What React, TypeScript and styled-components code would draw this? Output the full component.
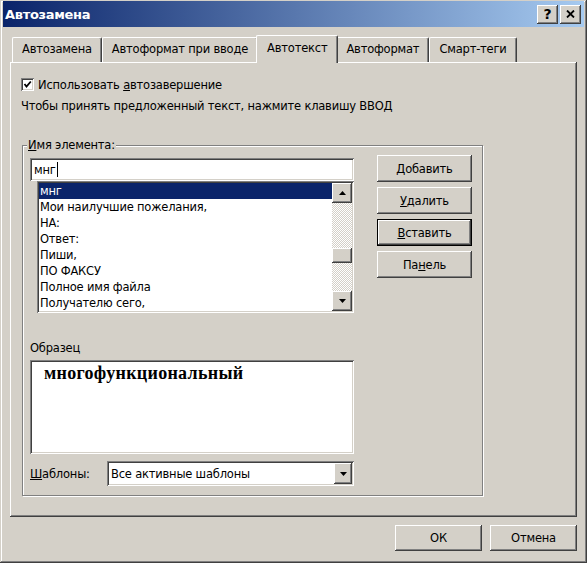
import React from "react";
import styled, { createGlobalStyle, css } from "styled-components";

const GlobalStyle = createGlobalStyle`
  html, body {
    margin: 0;
    padding: 0;
    background: #d4d0c8;
  }
  body {
    font-family: "DejaVu Sans", Tahoma, sans-serif;
    font-size: 11.5px;
    letter-spacing: -0.2px;
    color: #000;
  }
`;

const raised = css`
  background: #d4d0c8;
  box-shadow:
    inset -1px -1px #404040,
    inset 1px 1px #ffffff,
    inset -2px -2px #808080,
    inset 2px 2px #d4d0c8;
`;

const sunken = css`
  background: #fff;
  box-shadow:
    inset 1px 1px #808080,
    inset -1px -1px #ffffff,
    inset 2px 2px #404040,
    inset -2px -2px #d4d0c8;
`;

const items = [
  "мнг",
  "Мои наилучшие пожелания,",
  "НА:",
  "Ответ:",
  "Пиши,",
  "ПО ФАКСУ",
  "Полное имя файла",
  "Получателю сего,",
];

const tabs = [
  "Автозамена",
  "Автоформат при вводе",
  "Автотекст",
  "Автоформат",
  "Смарт-теги",
];

const ArrowUp = () => (
  <svg width="7" height="4" viewBox="0 0 7 4">
    <polygon points="3.5,0 7,4 0,4" fill="#000" />
  </svg>
);

const ArrowDown = () => (
  <svg width="7" height="4" viewBox="0 0 7 4">
    <polygon points="0,0 7,0 3.5,4" fill="#000" />
  </svg>
);

export default function App() {
  const thumbOffset = 45;

  return (
    <>
      <GlobalStyle />
      <Window>
        <TitleBar>
          <Title>Автозамена</Title>
          <Controls>
            <CaptionButton>
              <HelpGlyph>?</HelpGlyph>
            </CaptionButton>
            <CaptionButton>
              <svg width="9" height="8" viewBox="0 0 9 8">
                <path d="M1 0.5 L8 7.5 M8 0.5 L1 7.5" stroke="#000" strokeWidth="1.8" />
              </svg>
            </CaptionButton>
          </Controls>
        </TitleBar>

        <Body>
          <TabStrip>
            {tabs.map((t) => (
              <Tab key={t} $active={t === "Автотекст"}>
                {t}
              </Tab>
            ))}
          </TabStrip>

          <Panel>
            <CheckRow>
              <CheckBox>
                <svg width="9" height="9" viewBox="0 0 9 9">
                  <path d="M1.5 4 L3.5 6.5 L7.8 1.5" stroke="#000" strokeWidth="1.8" fill="none" />
                </svg>
              </CheckBox>
              <span>
                Использовать <Key>а</Key>втозавершение
              </span>
            </CheckRow>
            <Hint>Чтобы принять предложенный текст, нажмите клавишу ВВОД</Hint>

            <Group>
              <Legend>
                <Key>И</Key>мя элемента:
              </Legend>
              <GroupGrid>
                <LeftColumn>
                  <NameInput>
                    мнг<Caret />
                  </NameInput>
                  <ListBox>
                    <Items>
                      {items.map((it, i) => (
                        <Item key={it} $selected={i === 0}>
                          {it}
                        </Item>
                      ))}
                    </Items>
                    <ScrollBar>
                      <ScrollButton>
                        <ArrowUp />
                      </ScrollButton>
                      <Track $offset={thumbOffset}>
                        <Thumb />
                      </Track>
                      <ScrollButton>
                        <ArrowDown />
                      </ScrollButton>
                    </ScrollBar>
                  </ListBox>

                  <SampleLabel>Образец</SampleLabel>
                  <Sample>
                    <SampleText>многофункциональный</SampleText>
                  </Sample>

                  <TemplateRow>
                    <TemplateLabel>
                      <Key>Ш</Key>аблоны:
                    </TemplateLabel>
                    <Combo>
                      <ComboText>Все активные шаблоны</ComboText>
                      <ComboButton>
                        <ArrowDown />
                      </ComboButton>
                    </Combo>
                  </TemplateRow>
                </LeftColumn>

                <ActionColumn>
                  <ActionButton>
                    <Key>Д</Key>обавить
                  </ActionButton>
                  <ActionButton>
                    <Key>У</Key>далить
                  </ActionButton>
                  <ActionButton $default>
                    <Key>В</Key>ставить
                  </ActionButton>
                  <ActionButton>
                    Па<Key>н</Key>ель
                  </ActionButton>
                </ActionColumn>
              </GroupGrid>
            </Group>
          </Panel>

          <Footer>
            <DialogButton>ОК</DialogButton>
            <DialogButton>Отмена</DialogButton>
          </Footer>
        </Body>
      </Window>
    </>
  );
}

const Window = styled.div`
  width: 587px;
  height: 563px;
  box-sizing: border-box;
  padding: 1px 3px 3px 3px;
  display: flex;
  flex-direction: column;
  background: #d4d0c8;
  box-shadow:
    inset -1px -1px #404040,
    inset 1px 1px #d4d0c8,
    inset -2px -2px #808080,
    inset 2px 2px #ffffff;
`;

const TitleBar = styled.div`
  height: 26px;
  display: flex;
  align-items: center;
  justify-content: space-between;
  padding: 0 3px 0 2px;
  background: linear-gradient(to right, #0a246a, #a6caf0);
`;

const Title = styled.div`
  color: #fff;
  font-family: "DejaVu Sans", Tahoma, sans-serif;
  font-weight: 700;
  font-size: 13px;
  letter-spacing: -0.3px;
`;

const Controls = styled.div`
  display: flex;
  gap: 2px;
`;

const CaptionButton = styled.div`
  ${raised};
  width: 21px;
  height: 19px;
  display: flex;
  align-items: center;
  justify-content: center;
`;

const HelpGlyph = styled.span`
  font-family: "DejaVu Sans", sans-serif;
  font-weight: 700;
  font-size: 14px;
  line-height: 14px;
`;

const Body = styled.div`
  display: flex;
  flex-direction: column;
  padding: 8px 7px 0 7px;
`;

const TabStrip = styled.div`
  display: flex;
  align-items: flex-end;
  height: 28px;
  padding-left: 2px;
  margin-bottom: -1px;
  position: relative;
  z-index: 1;
`;

const Tab = styled.div<{ $active?: boolean }>`
  box-sizing: border-box;
  height: ${(p) => (p.$active ? "28px" : "25px")};
  margin: ${(p) => (p.$active ? "0 -2px 0 -2px" : "0 0 1px 0")};
  padding: ${(p) => (p.$active ? "5px 10px 0 10px" : "4px 9px 0 9px")};
  background: #d4d0c8;
  border-top: 1px solid #fff;
  border-left: 1px solid #fff;
  border-right: 1px solid #404040;
  border-radius: 2px 2px 0 0;
  box-shadow: inset -1px 0 #808080;
  white-space: nowrap;
  position: relative;
  z-index: ${(p) => (p.$active ? 2 : 0)};
`;

const Panel = styled.div`
  box-sizing: border-box;
  height: 455px;
  padding: 16px 11px 0 11px;
  background: #d4d0c8;
  box-shadow:
    inset -1px -1px #404040,
    inset 1px 1px #ffffff,
    inset -2px -2px #808080;
`;

const CheckRow = styled.div`
  display: flex;
  align-items: center;
  gap: 4px;
  height: 13px;
  line-height: 14px;
`;

const CheckBox = styled.div`
  ${sunken};
  width: 13px;
  height: 13px;
  flex: none;
  display: flex;
  align-items: center;
  justify-content: center;
`;

const Key = styled.span`
  text-decoration: underline;
`;

const Hint = styled.div`
  margin-top: 8px;
  line-height: 14px;
`;

const Group = styled.fieldset`
  box-sizing: border-box;
  margin: 25px 0 0 1px;
  width: 461px;
  height: 358px;
  padding: 3px 7px 0 7px;
  border: 1px solid #808080;
  box-shadow:
    1px 1px 0 #ffffff,
    inset 1px 1px 0 #ffffff;
`;

const Legend = styled.legend`
  padding: 0 1px;
  margin-left: -3px;
  line-height: 14px;
  background: #d4d0c8;
  position: relative;
`;

const GroupGrid = styled.div`
  display: grid;
  grid-template-columns: 324px 95px;
  column-gap: 23px;
  align-items: start;
`;

const LeftColumn = styled.div`
  display: flex;
  flex-direction: column;
  padding-top: 3px;
`;

const NameInput = styled.div`
  ${sunken};
  box-sizing: border-box;
  height: 23px;
  padding: 0 4px;
  display: flex;
  align-items: center;
`;

const Caret = styled.span`
  display: inline-block;
  width: 1px;
  height: 15px;
  margin-left: 1px;
  background: #000;
`;

const ListBox = styled.div`
  ${sunken};
  box-sizing: border-box;
  margin-left: 7px;
  height: 132px;
  padding: 2px;
  display: flex;
`;

const Items = styled.div`
  flex: 1;
  overflow: hidden;
`;

const Item = styled.div<{ $selected?: boolean }>`
  height: 16px;
  line-height: 16px;
  padding-left: 1px;
  white-space: nowrap;
  background: ${(p) => (p.$selected ? "#0a246a" : "transparent")};
  color: ${(p) => (p.$selected ? "#fff" : "#000")};
`;

const ScrollBar = styled.div`
  width: 20px;
  display: flex;
  flex-direction: column;
  background: repeating-conic-gradient(#ffffff 0 25%, #d4d0c8 0 50%) 0 0 / 2px 2px;
`;

const ScrollButton = styled.div`
  ${raised};
  height: 20px;
  flex: none;
  display: flex;
  align-items: center;
  justify-content: center;
`;

const Track = styled.div<{ $offset: number }>`
  flex: 1;
  padding-top: ${(p) => p.$offset}px;
`;

const Thumb = styled.div`
  ${raised};
  height: 15px;
`;

const SampleLabel = styled.div`
  margin-top: 28px;
  line-height: 14px;
`;

const Sample = styled.div`
  ${sunken};
  box-sizing: border-box;
  margin-top: 5px;
  height: 94px;
  padding: 3px 14px;
`;

const SampleText = styled.div`
  font-family: "Liberation Serif", "DejaVu Serif", serif;
  font-weight: 700;
  font-size: 18px;
  letter-spacing: 0.3px;
  line-height: 20px;
`;

const TemplateRow = styled.div`
  display: flex;
  align-items: center;
  margin-top: 7px;
`;

const TemplateLabel = styled.div`
  width: 77px;
  flex: none;
`;

const Combo = styled.div`
  ${sunken};
  box-sizing: border-box;
  flex: 1;
  height: 25px;
  padding: 2px;
  display: flex;
  align-items: center;
`;

const ComboText = styled.div`
  flex: 1;
  padding-left: 2px;
  white-space: nowrap;
`;

const ComboButton = styled.div`
  ${raised};
  width: 18px;
  height: 21px;
  display: flex;
  align-items: center;
  justify-content: center;
`;

const ActionColumn = styled.div`
  display: flex;
  flex-direction: column;
  gap: 5px;
`;

const ActionButton = styled.div<{ $default?: boolean }>`
  ${raised};
  box-sizing: border-box;
  height: 27px;
  display: flex;
  align-items: center;
  justify-content: center;
  ${(p) =>
    p.$default &&
    css`
      border: 1px solid #000;
    `}
`;

const Footer = styled.div`
  display: flex;
  justify-content: flex-end;
  gap: 8px;
  margin-top: 8px;
`;

const DialogButton = styled.div`
  ${raised};
  width: 87px;
  height: 26px;
  display: flex;
  align-items: center;
  justify-content: center;
`;
